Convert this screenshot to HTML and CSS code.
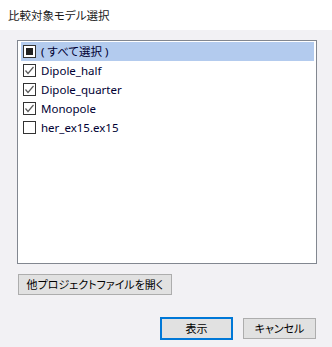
FILE: index.html
```html
<!DOCTYPE html>
<html lang="ja">
<head>
    <meta charset="UTF-8">
    <title>比較対象モデル選択</title>
    <link rel="stylesheet" href="styles.css">
</head>
<body>
    <div class="dialog">
        <div class="title-bar">比較対象モデル選択</div>

        <div class="dialog-body">
            <div class="model-list">
                <div class="model-row selected">
                    <span class="check-box partial"></span>
                    <span class="model-name">( すべて選択 )</span>
                </div>
                <div class="model-row">
                    <span class="check-box">
                        <svg width="11" height="11" viewBox="0 0 11 11"><polyline points="1.5,5.5 4,8.5 9.5,2" fill="none" stroke="#5a5a5a" stroke-width="1.2"/></svg>
                    </span>
                    <span class="model-name">Dipole_half</span>
                </div>
                <div class="model-row">
                    <span class="check-box">
                        <svg width="11" height="11" viewBox="0 0 11 11"><polyline points="1.5,5.5 4,8.5 9.5,2" fill="none" stroke="#5a5a5a" stroke-width="1.2"/></svg>
                    </span>
                    <span class="model-name">Dipole_quarter</span>
                </div>
                <div class="model-row">
                    <span class="check-box">
                        <svg width="11" height="11" viewBox="0 0 11 11"><polyline points="1.5,5.5 4,8.5 9.5,2" fill="none" stroke="#5a5a5a" stroke-width="1.2"/></svg>
                    </span>
                    <span class="model-name">Monopole</span>
                </div>
                <div class="model-row">
                    <span class="check-box"></span>
                    <span class="model-name">her_ex15.ex15</span>
                </div>
            </div>

            <button class="win-btn open-btn">他プロジェクトファイルを開く</button>

            <div class="dialog-actions">
                <button class="win-btn default-btn">表示</button>
                <button class="win-btn">キャンセル</button>
            </div>
        </div>
    </div>
</body>
</html>
```

FILE: styles.css
```css
:root {
    --window-bg: #f2f1f4;
    --btn-bg: #e1e1e1;
    --btn-border: #adadad;
    --accent: #0078d7;
    --list-border: #828790;
    --select-bg: #b3cbee;
}

* {
    margin: 0;
    padding: 0;
    box-sizing: border-box;
}

body {
    width: 332px;
    height: 347px;
    background: var(--window-bg);
    font-family: "Noto Sans", "Noto Sans CJK JP", sans-serif;
    font-size: 12px;
    color: #000;
    overflow: hidden;
}

.dialog {
    display: flex;
    flex-direction: column;
    height: 100%;
}

.title-bar {
    height: 30px;
    background: #fff;
    padding: 0 8px;
    display: flex;
    align-items: center;
    font-family: "Noto Sans CJK JP", sans-serif;
    font-feature-settings: "palt";
    font-size: 11.5px;
    color: #1a1a1a;
}

.dialog-body {
    flex: 1;
    display: flex;
    flex-direction: column;
    padding: 10px 16px 7px 17px;
}

/* list with checkboxes */
.model-list {
    width: 300px;
    height: 224px;
    background: #fff;
    border: 1px solid var(--list-border);
    padding: 1px 2px 0 3px;
}

.model-row {
    height: 19px;
    display: flex;
    align-items: center;
    padding-left: 2px;
}

.model-row.selected {
    background: var(--select-bg);
}

.check-box {
    width: 13px;
    height: 13px;
    border: 1px solid #333;
    background: #fff;
    display: flex;
    align-items: center;
    justify-content: center;
    margin-right: 5px;
    flex-shrink: 0;
}

.check-box.partial::after {
    content: "";
    width: 7px;
    height: 7px;
    background: #222;
}

.model-name {
    font-family: "Noto Sans", "Noto Sans CJK JP", sans-serif;
    font-feature-settings: "palt";
    font-size: 11.5px;
    color: #000033;
    line-height: 19px;
}

/* buttons */
.win-btn {
    font-family: "Noto Sans CJK JP", sans-serif;
    font-feature-settings: "palt";
    font-size: 11px;
    color: #000;
    background: var(--btn-bg);
    border: 1px solid var(--btn-border);
    height: 21px;
    line-height: 1;
}

.open-btn {
    width: 154px;
    margin-top: 10px;
    margin-left: 1px;
}

.dialog-actions {
    margin-top: auto;
    display: flex;
    justify-content: flex-end;
    align-items: center;
    gap: 10px;
}

.dialog-actions .win-btn {
    width: 73px;
    height: 21px;
}

.dialog-actions .default-btn {
    border: 2px solid var(--accent);
    height: 23px;
}
```
